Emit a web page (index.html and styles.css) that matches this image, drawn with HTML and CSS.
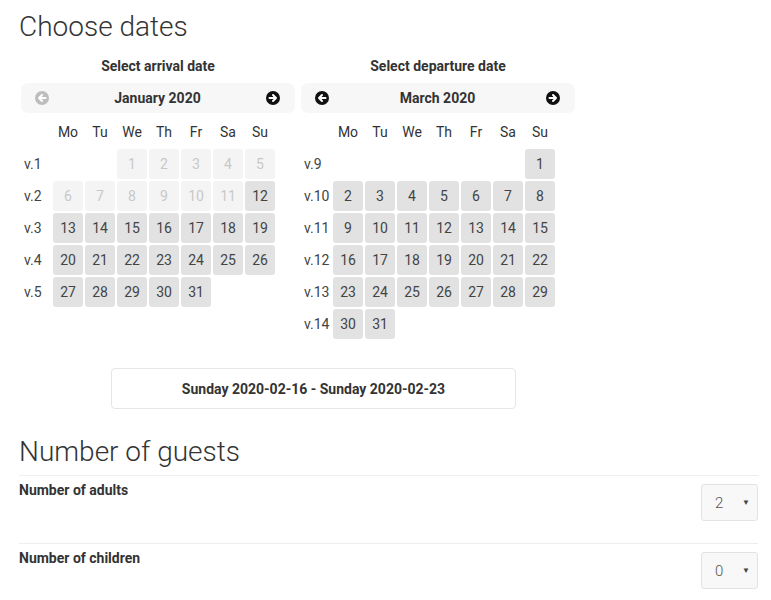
FILE: index.html
```html
<!DOCTYPE html>
<html>
<head>
<meta charset="utf-8">
<link rel="stylesheet" href="styles.css">
</head>
<body>
<div class="page">
  <h1 class="title">Choose dates</h1>
  <div class="calendars">
    <div class="cal">
      <div class="cal-caption">Select arrival date</div>
      <div class="cal-nav">
        <svg class="nav-icon disabled" viewBox="0 0 14 14"><circle cx="7" cy="7" r="7"/><path d="M10.5 7H4.5M7 4L4 7L7 10" /></svg>
        <span class="month">January 2020</span>
        <svg class="nav-icon" viewBox="0 0 14 14"><circle cx="7" cy="7" r="7"/><path d="M3.5 7H9.5M7 4L10 7L7 10" /></svg>
      </div>
      <div class="grid">
        <span></span><span class="dh">Mo</span><span class="dh">Tu</span><span class="dh">We</span><span class="dh">Th</span><span class="dh">Fr</span><span class="dh">Sa</span><span class="dh">Su</span>
        <span class="wk">v.1</span><span></span><span></span><span class="d off">1</span><span class="d off">2</span><span class="d off">3</span><span class="d off">4</span><span class="d off">5</span>
        <span class="wk">v.2</span><span class="d off">6</span><span class="d off">7</span><span class="d off">8</span><span class="d off">9</span><span class="d off">10</span><span class="d off">11</span><span class="d">12</span>
        <span class="wk">v.3</span><span class="d">13</span><span class="d">14</span><span class="d">15</span><span class="d">16</span><span class="d">17</span><span class="d">18</span><span class="d">19</span>
        <span class="wk">v.4</span><span class="d">20</span><span class="d">21</span><span class="d">22</span><span class="d">23</span><span class="d">24</span><span class="d">25</span><span class="d">26</span>
        <span class="wk">v.5</span><span class="d">27</span><span class="d">28</span><span class="d">29</span><span class="d">30</span><span class="d">31</span><span></span><span></span>
      </div>
    </div>
    <div class="cal">
      <div class="cal-caption">Select departure date</div>
      <div class="cal-nav">
        <svg class="nav-icon" viewBox="0 0 14 14"><circle cx="7" cy="7" r="7"/><path d="M10.5 7H4.5M7 4L4 7L7 10" /></svg>
        <span class="month">March 2020</span>
        <svg class="nav-icon" viewBox="0 0 14 14"><circle cx="7" cy="7" r="7"/><path d="M3.5 7H9.5M7 4L10 7L7 10" /></svg>
      </div>
      <div class="grid">
        <span></span><span class="dh">Mo</span><span class="dh">Tu</span><span class="dh">We</span><span class="dh">Th</span><span class="dh">Fr</span><span class="dh">Sa</span><span class="dh">Su</span>
        <span class="wk">v.9</span><span></span><span></span><span></span><span></span><span></span><span></span><span class="d">1</span>
        <span class="wk">v.10</span><span class="d">2</span><span class="d">3</span><span class="d">4</span><span class="d">5</span><span class="d">6</span><span class="d">7</span><span class="d">8</span>
        <span class="wk">v.11</span><span class="d">9</span><span class="d">10</span><span class="d">11</span><span class="d">12</span><span class="d">13</span><span class="d">14</span><span class="d">15</span>
        <span class="wk">v.12</span><span class="d">16</span><span class="d">17</span><span class="d">18</span><span class="d">19</span><span class="d">20</span><span class="d">21</span><span class="d">22</span>
        <span class="wk">v.13</span><span class="d">23</span><span class="d">24</span><span class="d">25</span><span class="d">26</span><span class="d">27</span><span class="d">28</span><span class="d">29</span>
        <span class="wk">v.14</span><span class="d">30</span><span class="d">31</span><span></span><span></span><span></span><span></span><span></span>
      </div>
    </div>
  </div>
  <div class="range">Sunday 2020-02-16 - Sunday 2020-02-23</div>

  <h1 class="title guests-title">Number of guests</h1>
  <div class="guest-row">
    <span class="guest-label">Number of adults</span>
    <div class="select"><span>2</span><span class="caret">▼</span></div>
  </div>
  <div class="guest-row">
    <span class="guest-label">Number of children</span>
    <div class="select"><span>0</span><span class="caret">▼</span></div>
  </div>
</div>
</body>
</html>
```

FILE: styles.css
```css
html, body {
  margin: 0;
  padding: 0;
  background: #fff;
}
body {
  font-family: Roboto, "Liberation Sans", sans-serif;
  color: #333;
}
.page {
  padding: 0 13px 0 19px;
}
.title {
  font-weight: 300;
  font-size: 28px;
  line-height: 34px;
  color: #333;
  margin: 10px 0 0 0;
}
.calendars {
  display: flex;
  gap: 6px;
  margin-left: 2px;
  margin-top: 14px;
}
.cal {
  width: 274px;
}
.cal-caption {
  text-align: center;
  font-weight: 700;
  font-size: 14px;
  line-height: 17px;
  color: #333;
}
.cal-nav {
  margin-top: 8px;
  height: 30px;
  background: #f7f7f7;
  border-radius: 7px;
  display: flex;
  align-items: center;
  justify-content: space-between;
  padding: 0 15px 0 14px;
}
.month {
  font-weight: 700;
  font-size: 14px;
  color: #333;
}
.nav-icon {
  width: 14px;
  height: 14px;
  display: block;
}
.nav-icon circle {
  fill: #111;
}
.nav-icon path {
  fill: none;
  stroke: #fff;
  stroke-width: 2;
  stroke-linecap: round;
  stroke-linejoin: round;
}
.nav-icon.disabled circle {
  fill: #bdbdbd;
}
.grid {
  margin-top: 4px;
  display: grid;
  grid-template-columns: repeat(8, 30px);
  grid-auto-rows: 30px;
  gap: 2px;
}
.grid > span {
  display: flex;
  align-items: center;
  justify-content: center;
  font-size: 14px;
}
.dh {
  color: #333;
}
.wk {
  color: #444;
}
.grid > .wk {
  justify-content: flex-start;
  padding-left: 3px;
}
.d {
  background: #e2e2e2;
  border-radius: 3px;
  color: #444;
}
.d.off {
  background: #f4f4f4;
  color: #c8c8c8;
}
.range {
  margin: 29px 0 0 92px;
  width: 403px;
  height: 39px;
  border: 1px solid #e6e6e6;
  border-radius: 4px;
  display: flex;
  align-items: center;
  justify-content: center;
  font-weight: 700;
  font-size: 14px;
  color: #333;
}
.guests-title {
  margin-top: 26px;
  padding-bottom: 6px;
  border-bottom: 1px solid #eee;
}
.guest-row {
  display: flex;
  justify-content: space-between;
  align-items: flex-start;
  height: 68px;
  border-bottom: 1px solid #eee;
  padding-top: 8px;
  box-sizing: border-box;
}
.guest-row:last-child {
  border-bottom: none;
}
.guest-label {
  font-weight: 700;
  font-size: 14px;
  color: #333;
  margin-top: -2px;
}
.select {
  width: 57px;
  height: 37px;
  box-sizing: border-box;
  border: 1px solid #e3e3e3;
  border-radius: 3px;
  background: #f8f8f8;
  display: flex;
  align-items: center;
  padding: 0 7px 0 13px;
  justify-content: space-between;
  font-size: 15px;
  font-weight: 300;
  color: #555;
}
.caret {
  font-size: 8px;
  color: #444;
}
```
